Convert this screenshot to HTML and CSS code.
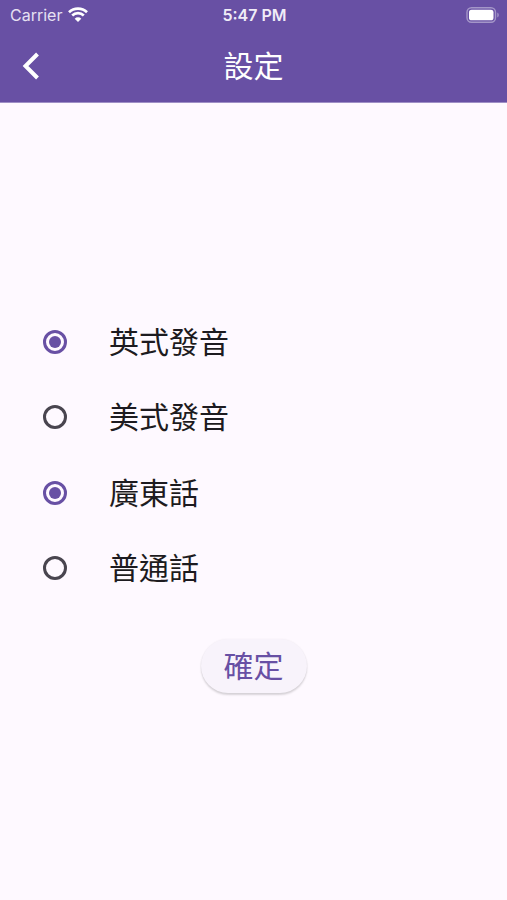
FILE: index.html
```html
<!DOCTYPE html>
<html lang="zh-Hant">
<head>
<meta charset="utf-8">
<meta name="viewport" content="width=device-width, initial-scale=1">
<title>設定</title>
<link rel="stylesheet" href="styles.css">
</head>
<body>
<header class="header">
  <div class="status">
    <div class="carrier">
      <span>Carrier</span>
      <svg class="wifi" viewBox="0 0 20 15" aria-hidden="true">
        <path d="M1 5.200a13 13 0 0 1 18 0M4.200 8.500a8.400 8.400 0 0 1 11.600 0" fill="none" stroke="currentColor" stroke-width="2.700"/>
        <path d="M10 15l-3.300-3.300a4.700 4.700 0 0 1 6.600 0z" fill="currentColor"/>
      </svg>
    </div>
    <time class="clock">5:47 PM</time>
    <svg class="battery" viewBox="0 0 34 16" aria-hidden="true">
      <rect x="2" y="0.700" width="28.500" height="14.600" rx="4.500" fill="none" stroke="#fff" stroke-opacity=".4" stroke-width="1.400"/>
      <rect x="4" y="2.700" width="24.500" height="10.600" rx="2.600" fill="#fff"/>
      <path d="M32.300 5.500v5q1.500-.8 1.500-2.500t-1.500-2.500z" fill="#fff" fill-opacity=".4"/>
    </svg>
  </div>
  <nav class="bar">
    <button class="back" type="button" aria-label="返回">
      <svg viewBox="0 0 18 28" aria-hidden="true"><path d="M15.500 2L3.500 14l12 12" fill="none" stroke="currentColor" stroke-width="4"/></svg>
    </button>
    <h1 class="title">設定</h1>
  </nav>
</header>
<main class="main">
  <form class="form">
    <div class="group" role="radiogroup">
      <label class="option"><input class="radio" type="radio" name="english" checked><span>英式發音</span></label>
      <label class="option"><input class="radio" type="radio" name="english"><span>美式發音</span></label>
    </div>
    <div class="group" role="radiogroup">
      <label class="option"><input class="radio" type="radio" name="chinese" checked><span>廣東話</span></label>
      <label class="option"><input class="radio" type="radio" name="chinese"><span>普通話</span></label>
    </div>
    <button class="confirm" type="button">確定</button>
  </form>
</main>
</body>
</html>
```
FILE: styles.css
```css
* {
  box-sizing: border-box;
}

body {
  margin: 0;
  min-height: 100vh;
  display: flex;
  flex-direction: column;
  background: #fef9ff;
  color: #1d1b20;
  font-family: Inter, "Noto Sans CJK TC", sans-serif;
}

.header {
  background: #6850a4;
  color: #fff;
  border-bottom: 1px solid #9f8fc6;
}

.status {
  display: grid;
  grid-template-columns: 1fr auto 1fr;
  align-items: center;
  height: 29px;
  padding: 0 8px 0 10px;
  font-size: 16px;
}

.carrier {
  display: flex;
  align-items: center;
  gap: 6px;
  color: #e6e0f2;
}

.wifi {
  width: 20px;
  height: 15px;
  color: #fff;
}

.clock {
  font-weight: 600;
  color: #f0ecf7;
}

.battery {
  width: 34px;
  height: 16px;
  justify-self: end;
}

.bar {
  display: grid;
  grid-template-columns: 62px 1fr 62px;
  align-items: center;
  height: 73px;
}

.back {
  height: 64px;
  padding: 0;
  border: 0;
  background: none;
  color: #fff;
  display: flex;
  align-items: center;
  justify-content: center;
}

.back svg {
  width: 18px;
  height: 28px;
}

.title {
  margin: 0;
  text-align: center;
  font-size: 30px;
  line-height: 40px;
  font-weight: 400;
}

.main {
  flex: 1;
  display: flex;
  flex-direction: column;
  justify-content: center;
}

.form {
  display: flex;
  flex-direction: column;
  gap: 1px;
}

.option {
  display: flex;
  align-items: center;
  gap: 42px;
  height: 75px;
  padding: 0 43px;
  font-size: 30px;
  line-height: 40px;
}

.radio {
  appearance: none;
  flex: none;
  display: grid;
  place-items: center;
  width: 24px;
  height: 24px;
  margin: 0;
  border: 3px solid #49454f;
  border-radius: 50%;
}

.radio:checked {
  border-color: #6850a4;
}

.radio:checked::before {
  content: "";
  width: 12px;
  height: 12px;
  border-radius: 50%;
  background: #6850a4;
}

.confirm {
  align-self: center;
  height: 54px;
  margin: 32px 0 6px;
  padding: 0 23px;
  border: 0;
  border-radius: 27px;
  background: #f8f3fb;
  box-shadow: 0 2px 2px rgba(0, 0, 0, 0.15), 0 0 2px rgba(0, 0, 0, 0.06);
  color: #6850a4;
  font-family: inherit;
  font-size: 30px;
  line-height: 40px;
}
```
